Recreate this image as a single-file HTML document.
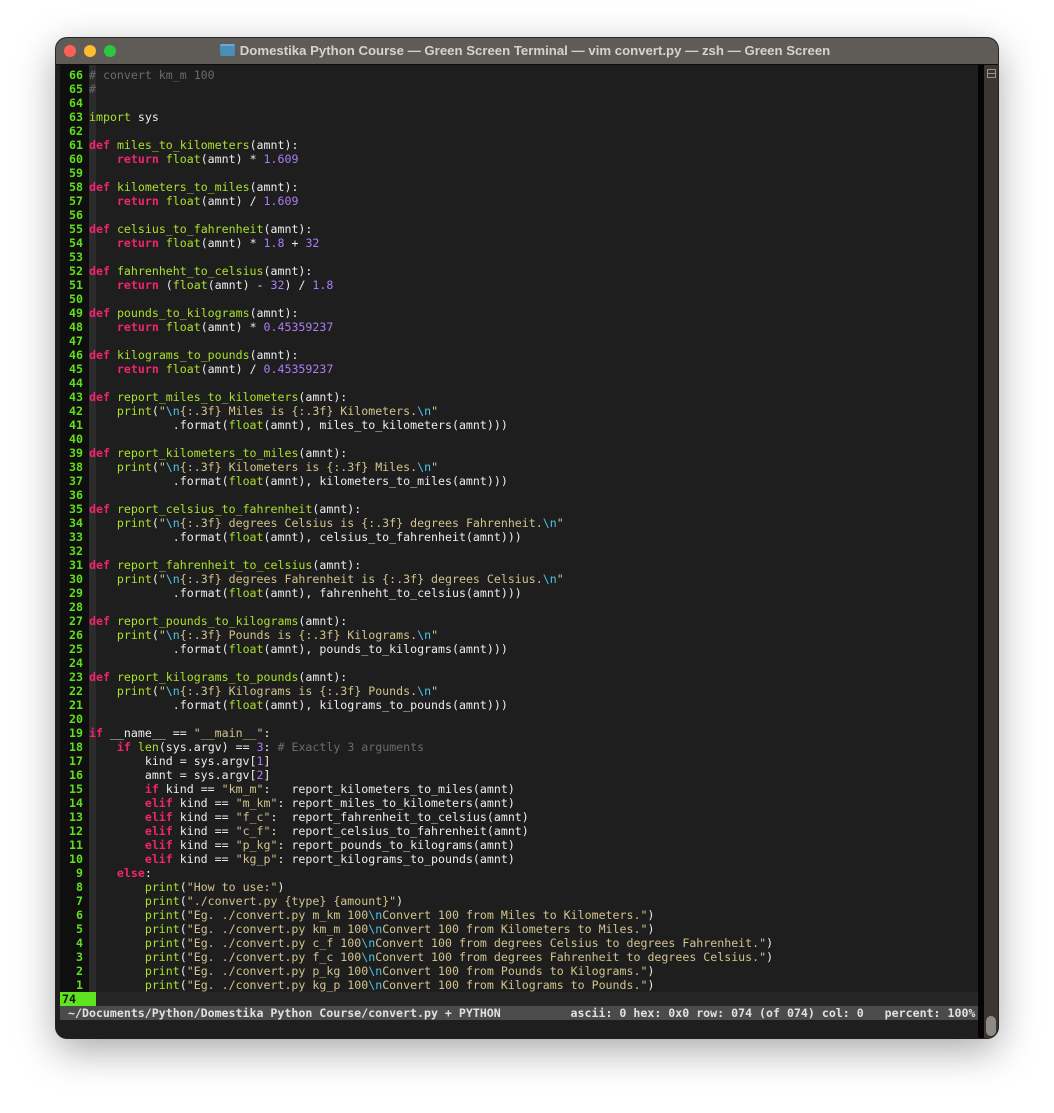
<!DOCTYPE html>
<html><head><meta charset="utf-8">
<style>
html,body{margin:0;padding:0;background:#fff;width:1054px;height:1113px;overflow:hidden}
.win{position:absolute;left:56px;top:38px;width:942px;height:1000px;border-radius:11px;background:#1e1e1e;box-shadow:0 12px 40px rgba(0,0,0,.35),0 0 0 1px #2a2a2a;overflow:hidden}
.tb{position:absolute;left:0;top:0;width:942px;height:26px;background:#5f5b56;border-bottom:1px solid #0d0d0d}
.dot{position:absolute;top:7px;width:12px;height:12px;border-radius:50%}
.title{position:absolute;left:0;right:0;top:5px;text-align:center;font:bold 13.2px "Liberation Sans",sans-serif;color:#d6d3cf;padding-right:4px}
.fold{display:inline-block;width:15px;height:12px;background:#4a8db5;border-radius:2px;vertical-align:-1px;margin-right:5px;border-top:2px solid #6aaad0;box-sizing:border-box}
.gut{position:absolute;left:4px;top:27px;width:29px;height:927px;background:#0f0f0f}
.strip{position:absolute;left:33px;top:27px;width:7px;height:927px;background:#2b2b2b}
.code{position:absolute;left:0;top:30px;font:11.6px/14px "DejaVu Sans Mono","Liberation Mono",monospace;color:#ececec}
.l{height:14px;position:relative;white-space:pre}
.n{display:inline-block;width:27px;text-align:right;color:#5fe01c;font-weight:bold;padding-right:6px}
.k{color:#f0246f;font-weight:bold}.f{color:#a8e22c}.s{color:#d2c38c}.e{color:#4cc3e8}.p{color:#ac7cf7}.c{color:#6b6b6b}
.r74{position:absolute;left:4px;top:954px;width:922px;height:14px;background:#262626;font:bold 11.6px/14px "DejaVu Sans Mono",monospace}
.r74 b{display:block;width:36px;height:14px;background:#5ee41e;color:#111;padding-left:2px;box-sizing:border-box}
.st{position:absolute;left:4px;top:968px;width:922px;height:14px;background:#4b4b4b;color:#e0e0e0;font:bold 11.6px/14px "DejaVu Sans Mono",monospace;white-space:pre;padding-left:8px;box-sizing:border-box}
.blk{position:absolute;left:922px;top:27px;width:6px;height:973px;background:#050505}
.sb{position:absolute;left:928px;top:27px;width:14px;height:973px;background:#3a3733}
.sbt{position:absolute;left:931px;top:31px;width:9px;height:9px;border:1px solid #9a9590;box-sizing:border-box}
.sbt:after{content:"";position:absolute;left:0;right:0;top:3px;height:1px;background:#9a9590}
.thumb{position:absolute;left:930px;top:978px;width:10px;height:20px;border-radius:5px;background:#8e8a85}
</style></head><body>
<div class="win">
<div class="tb">
<div class="dot" style="left:8px;background:#fe5f57"></div>
<div class="dot" style="left:28px;background:#febc2e"></div>
<div class="dot" style="left:48px;background:#28c840"></div>
<div class="title"><span class="fold"></span>Domestika Python Course — Green Screen Terminal — vim convert.py — zsh — Green Screen</div>
</div>
<div class="gut"></div><div class="strip"></div>
<div class="code">
<div class="l"><span class="n">66</span><span class="c"># convert km_m 100</span></div>
<div class="l"><span class="n">65</span><span class="c">#</span></div>
<div class="l"><span class="n">64</span></div>
<div class="l"><span class="n">63</span><span class="f">import</span> sys</div>
<div class="l"><span class="n">62</span></div>
<div class="l"><span class="n">61</span><span class="k">def</span> <span class="f">miles_to_kilometers</span>(amnt):</div>
<div class="l"><span class="n">60</span>    <span class="k">return</span> <span class="f">float</span>(amnt) * <span class="p">1.609</span></div>
<div class="l"><span class="n">59</span></div>
<div class="l"><span class="n">58</span><span class="k">def</span> <span class="f">kilometers_to_miles</span>(amnt):</div>
<div class="l"><span class="n">57</span>    <span class="k">return</span> <span class="f">float</span>(amnt) / <span class="p">1.609</span></div>
<div class="l"><span class="n">56</span></div>
<div class="l"><span class="n">55</span><span class="k">def</span> <span class="f">celsius_to_fahrenheit</span>(amnt):</div>
<div class="l"><span class="n">54</span>    <span class="k">return</span> <span class="f">float</span>(amnt) * <span class="p">1.8</span> + <span class="p">32</span></div>
<div class="l"><span class="n">53</span></div>
<div class="l"><span class="n">52</span><span class="k">def</span> <span class="f">fahrenheht_to_celsius</span>(amnt):</div>
<div class="l"><span class="n">51</span>    <span class="k">return</span> (<span class="f">float</span>(amnt) - <span class="p">32</span>) / <span class="p">1.8</span></div>
<div class="l"><span class="n">50</span></div>
<div class="l"><span class="n">49</span><span class="k">def</span> <span class="f">pounds_to_kilograms</span>(amnt):</div>
<div class="l"><span class="n">48</span>    <span class="k">return</span> <span class="f">float</span>(amnt) * <span class="p">0.45359237</span></div>
<div class="l"><span class="n">47</span></div>
<div class="l"><span class="n">46</span><span class="k">def</span> <span class="f">kilograms_to_pounds</span>(amnt):</div>
<div class="l"><span class="n">45</span>    <span class="k">return</span> <span class="f">float</span>(amnt) / <span class="p">0.45359237</span></div>
<div class="l"><span class="n">44</span></div>
<div class="l"><span class="n">43</span><span class="k">def</span> <span class="f">report_miles_to_kilometers</span>(amnt):</div>
<div class="l"><span class="n">42</span>    <span class="f">print</span>(<span class="s">"</span><span class="e">\n</span><span class="s">{:.3f} Miles is {:.3f} Kilometers.</span><span class="e">\n</span><span class="s">"</span></div>
<div class="l"><span class="n">41</span>            .format(<span class="f">float</span>(amnt), miles_to_kilometers(amnt)))</div>
<div class="l"><span class="n">40</span></div>
<div class="l"><span class="n">39</span><span class="k">def</span> <span class="f">report_kilometers_to_miles</span>(amnt):</div>
<div class="l"><span class="n">38</span>    <span class="f">print</span>(<span class="s">"</span><span class="e">\n</span><span class="s">{:.3f} Kilometers is {:.3f} Miles.</span><span class="e">\n</span><span class="s">"</span></div>
<div class="l"><span class="n">37</span>            .format(<span class="f">float</span>(amnt), kilometers_to_miles(amnt)))</div>
<div class="l"><span class="n">36</span></div>
<div class="l"><span class="n">35</span><span class="k">def</span> <span class="f">report_celsius_to_fahrenheit</span>(amnt):</div>
<div class="l"><span class="n">34</span>    <span class="f">print</span>(<span class="s">"</span><span class="e">\n</span><span class="s">{:.3f} degrees Celsius is {:.3f} degrees Fahrenheit.</span><span class="e">\n</span><span class="s">"</span></div>
<div class="l"><span class="n">33</span>            .format(<span class="f">float</span>(amnt), celsius_to_fahrenheit(amnt)))</div>
<div class="l"><span class="n">32</span></div>
<div class="l"><span class="n">31</span><span class="k">def</span> <span class="f">report_fahrenheit_to_celsius</span>(amnt):</div>
<div class="l"><span class="n">30</span>    <span class="f">print</span>(<span class="s">"</span><span class="e">\n</span><span class="s">{:.3f} degrees Fahrenheit is {:.3f} degrees Celsius.</span><span class="e">\n</span><span class="s">"</span></div>
<div class="l"><span class="n">29</span>            .format(<span class="f">float</span>(amnt), fahrenheht_to_celsius(amnt)))</div>
<div class="l"><span class="n">28</span></div>
<div class="l"><span class="n">27</span><span class="k">def</span> <span class="f">report_pounds_to_kilograms</span>(amnt):</div>
<div class="l"><span class="n">26</span>    <span class="f">print</span>(<span class="s">"</span><span class="e">\n</span><span class="s">{:.3f} Pounds is {:.3f} Kilograms.</span><span class="e">\n</span><span class="s">"</span></div>
<div class="l"><span class="n">25</span>            .format(<span class="f">float</span>(amnt), pounds_to_kilograms(amnt)))</div>
<div class="l"><span class="n">24</span></div>
<div class="l"><span class="n">23</span><span class="k">def</span> <span class="f">report_kilograms_to_pounds</span>(amnt):</div>
<div class="l"><span class="n">22</span>    <span class="f">print</span>(<span class="s">"</span><span class="e">\n</span><span class="s">{:.3f} Kilograms is {:.3f} Pounds.</span><span class="e">\n</span><span class="s">"</span></div>
<div class="l"><span class="n">21</span>            .format(<span class="f">float</span>(amnt), kilograms_to_pounds(amnt)))</div>
<div class="l"><span class="n">20</span></div>
<div class="l"><span class="n">19</span><span class="k">if</span> __name__ == <span class="s">"__main__"</span>:</div>
<div class="l"><span class="n">18</span>    <span class="k">if</span> <span class="f">len</span>(sys.argv) == <span class="p">3</span>: <span class="c"># Exactly 3 arguments</span></div>
<div class="l"><span class="n">17</span>        kind = sys.argv[<span class="p">1</span>]</div>
<div class="l"><span class="n">16</span>        amnt = sys.argv[<span class="p">2</span>]</div>
<div class="l"><span class="n">15</span>        <span class="k">if</span> kind == <span class="s">"km_m"</span>:   report_kilometers_to_miles(amnt)</div>
<div class="l"><span class="n">14</span>        <span class="k">elif</span> kind == <span class="s">"m_km"</span>: report_miles_to_kilometers(amnt)</div>
<div class="l"><span class="n">13</span>        <span class="k">elif</span> kind == <span class="s">"f_c"</span>:  report_fahrenheit_to_celsius(amnt)</div>
<div class="l"><span class="n">12</span>        <span class="k">elif</span> kind == <span class="s">"c_f"</span>:  report_celsius_to_fahrenheit(amnt)</div>
<div class="l"><span class="n">11</span>        <span class="k">elif</span> kind == <span class="s">"p_kg"</span>: report_pounds_to_kilograms(amnt)</div>
<div class="l"><span class="n">10</span>        <span class="k">elif</span> kind == <span class="s">"kg_p"</span>: report_kilograms_to_pounds(amnt)</div>
<div class="l"><span class="n">9</span>    <span class="k">else</span>:</div>
<div class="l"><span class="n">8</span>        <span class="f">print</span>(<span class="s">"How to use:"</span>)</div>
<div class="l"><span class="n">7</span>        <span class="f">print</span>(<span class="s">"./convert.py {type} {amount}"</span>)</div>
<div class="l"><span class="n">6</span>        <span class="f">print</span>(<span class="s">"Eg. ./convert.py m_km 100</span><span class="e">\n</span><span class="s">Convert 100 from Miles to Kilometers."</span>)</div>
<div class="l"><span class="n">5</span>        <span class="f">print</span>(<span class="s">"Eg. ./convert.py km_m 100</span><span class="e">\n</span><span class="s">Convert 100 from Kilometers to Miles."</span>)</div>
<div class="l"><span class="n">4</span>        <span class="f">print</span>(<span class="s">"Eg. ./convert.py c_f 100</span><span class="e">\n</span><span class="s">Convert 100 from degrees Celsius to degrees Fahrenheit."</span>)</div>
<div class="l"><span class="n">3</span>        <span class="f">print</span>(<span class="s">"Eg. ./convert.py f_c 100</span><span class="e">\n</span><span class="s">Convert 100 from degrees Fahrenheit to degrees Celsius."</span>)</div>
<div class="l"><span class="n">2</span>        <span class="f">print</span>(<span class="s">"Eg. ./convert.py p_kg 100</span><span class="e">\n</span><span class="s">Convert 100 from Pounds to Kilograms."</span>)</div>
<div class="l"><span class="n">1</span>        <span class="f">print</span>(<span class="s">"Eg. ./convert.py kg_p 100</span><span class="e">\n</span><span class="s">Convert 100 from Kilograms to Pounds."</span>)</div>
</div>
<div class="r74"><b>74</b></div>
<div class="st">~/Documents/Python/Domestika Python Course/convert.py + PYTHON          ascii: 0 hex: 0x0 row: 074 (of 074) col: 0   percent: 100%</div>
<div class="blk"></div>
<div class="sb"></div><div class="sbt"></div><div class="thumb"></div>
</div>
</body></html>
